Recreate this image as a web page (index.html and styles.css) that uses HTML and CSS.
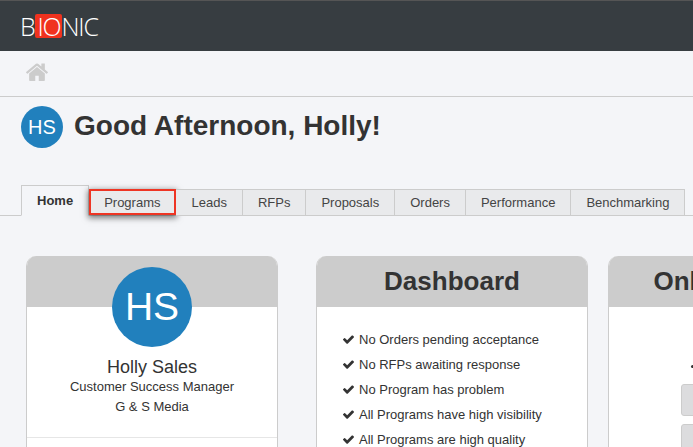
FILE: index.html
```html
<!DOCTYPE html>
<html lang="en">
<head>
<meta charset="utf-8">
<title>Bionic</title>
<link rel="stylesheet" href="styles.css">
</head>
<body>
<svg class="defs" width="0" height="0" aria-hidden="true">
  <symbol id="check" viewBox="128 320 1543 1180"><path d="M1671 566q0 40-28 68l-724 724-136 136q-28 28-68 28t-68-28l-136-136-362-362q-28-28-28-68t28-68l136-136q28-28 68-28t68 28l294 295 656-657q28-28 68-28t68 28l136 136q28 28 28 68z"/></symbol>
</svg>
<header class="topbar">
  <div class="logo"><span>B</span><span class="logo-mark">IO</span><span>NIC</span></div>
</header>
<nav class="crumbs">
  <svg class="home" width="22" height="18" viewBox="90 224 1612 1312"><path fill="#ccc" d="M1472 992v480q0 26-19 45t-45 19h-384v-384h-256v384h-384q-26 0-45-19t-19-45v-480q0-1 .5-3t.5-3l575-474 575 474q1 2 1 6zm223-69l-62 74q-8 9-21 11h-3q-13 0-21-7l-692-577-692 577q-12 8-24 7-13-2-21-11l-62-74q-8-10-7-23.5t11-21.5l719-599q32-26 76-26t76 26l244 204v-195q0-14 9-23t23-9h192q14 0 23 9t9 23v408l219 182q10 8 11 21.5t-7 23.5z"/></svg>
</nav>
<section class="greeting">
  <div class="avatar-small">HS</div>
  <h1>Good Afternoon, Holly!</h1>
</section>
<div class="tabs">
  <a class="tab active">Home</a>
  <a class="tab tab-programs">Programs<span class="highlight"></span></a>
  <a class="tab">Leads</a>
  <a class="tab">RFPs</a>
  <a class="tab">Proposals</a>
  <a class="tab">Orders</a>
  <a class="tab">Performance</a>
  <a class="tab">Benchmarking</a>
</div>
<main class="cards">
  <article class="card card-profile">
    <div class="card-head"></div>
    <div class="avatar-large">HS</div>
    <div class="profile-body">
      <div class="name">Holly Sales</div>
      <div class="line">Customer Success Manager</div>
      <div class="line">G &amp; S Media</div>
    </div>
    <hr class="divider">
  </article>
  <article class="card card-dash">
    <div class="card-head"><h2>Dashboard</h2></div>
    <ul class="checks">
      <li><svg class="tick"><use href="#check"/></svg>No Orders pending acceptance</li>
      <li><svg class="tick"><use href="#check"/></svg>No RFPs awaiting response</li>
      <li><svg class="tick"><use href="#check"/></svg>No Program has problem</li>
      <li><svg class="tick"><use href="#check"/></svg>All Programs have high visibility</li>
      <li><svg class="tick"><use href="#check"/></svg>All Programs are high quality</li>
    </ul>
  </article>
  <article class="card card-online">
    <div class="card-head"><h2>Online Activity</h2></div>
    <div class="online-body">
      <div class="dot-row"><span class="dot"></span></div>
      <div class="stub"></div>
      <div class="stub"></div>
    </div>
  </article>
</main>
</body>
</html>
```
FILE: styles.css
```css
* { box-sizing: border-box; }
html, body { margin: 0; height: 447px; overflow: hidden; }
body { background: #f4f5f8; font-family: "Liberation Sans", Arial, sans-serif; color: #333; }
.defs { position: absolute; }
.topbar { height: 51px; background: #373d41; border-top: 1px solid #555; padding: 13px 0 0 20px; }
.logo { display: flex; height: 24px; align-items: center; color: #fff; font-family: "Open Sans", sans-serif; font-size: 25px; font-weight: 300; letter-spacing: -1.2px; line-height: 24px; }
.logo-mark { background: #f0321e; border-radius: 2px; padding: 0 1px 0 2px; margin-left: 1px; }
.crumbs { height: 46px; border-bottom: 1px solid #ccc; padding: 12px 0 0 26px; }
.home { display: block; }
.greeting { height: 88px; display: flex; align-items: flex-start; gap: 11px; padding: 9px 0 0 21px; }
.avatar-small { width: 42px; height: 42px; border-radius: 50%; background: #2180bd; color: #fff; font-size: 20px; display: flex; align-items: center; justify-content: center; }
h1 { margin: 0; font-size: 28px; line-height: 40px; font-weight: 700; color: #333; }
.tabs { height: 31px; display: flex; align-items: flex-end; padding-left: 21px; border-bottom: 1px solid #ccc; }
.tab { position: relative; height: 27px; margin-bottom: -1px; padding: 0 15px; font-size: 13px; line-height: 26px; color: #444; background: #e9eaec; border: 1px solid #ccc; border-left: 0; }
.tab.active { height: 31px; padding: 0 15px; line-height: 30px; font-weight: 700; background: #f4f5f8; border-left: 1px solid #ccc; border-bottom-color: #f4f5f8; color: #333; }
.highlight { position: absolute; left: 0; top: -1px; right: -1px; bottom: 0; border: 2px solid #ee3524; box-shadow: 0 2px 6px 1px rgba(0,0,0,.5); }
.cards { display: flex; gap: 20px; padding: 40px 0 0 26px; align-items: flex-start; height: 231px; overflow: hidden; }
.card { position: relative; flex: none; height: 300px; background: #fff; border: 1px solid #ccc; border-top: 0; border-radius: 10px 10px 0 0; overflow: hidden; }
.card-profile { width: 252px; margin-right: 18px; }
.card-dash { width: 272px; }
.card-online { width: 272px; }
.card-head { height: 51px; background: #ccc; }
h2 { margin: 0; font-size: 26px; line-height: 51px; font-weight: 700; text-align: center; color: #333; white-space: nowrap; }
.avatar-large { position: absolute; left: 85px; top: 11px; width: 80px; height: 80px; border-radius: 50%; background: #2180bd; color: #fff; font-size: 39px; display: flex; align-items: center; justify-content: center; }
.profile-body { padding-top: 51px; text-align: center; }
.name { font-size: 18px; line-height: 19px; }
.line { font-size: 13px; line-height: 20px; }
.divider { border: 0; border-top: 1px solid #e6e6e6; margin: 20px 0 0; }
.checks { list-style: none; margin: 0; padding: 20px 0 0 26px; font-size: 13px; line-height: 25px; }
.checks li { display: flex; align-items: center; }
.tick { width: 11px; height: 9px; flex: none; margin-right: 5px; fill: #333; }
.online-body { padding: 52px 0 0 72px; }
.dot-row { height: 19px; }
.dot { display: block; width: 3px; height: 3px; background: #333; border-radius: 50%; margin: 6px 0 0 10px; }
.stub { width: 60px; height: 32px; margin-bottom: 8px; background: #dcdcde; border: 1px solid #ccc; border-radius: 3px; }
```
